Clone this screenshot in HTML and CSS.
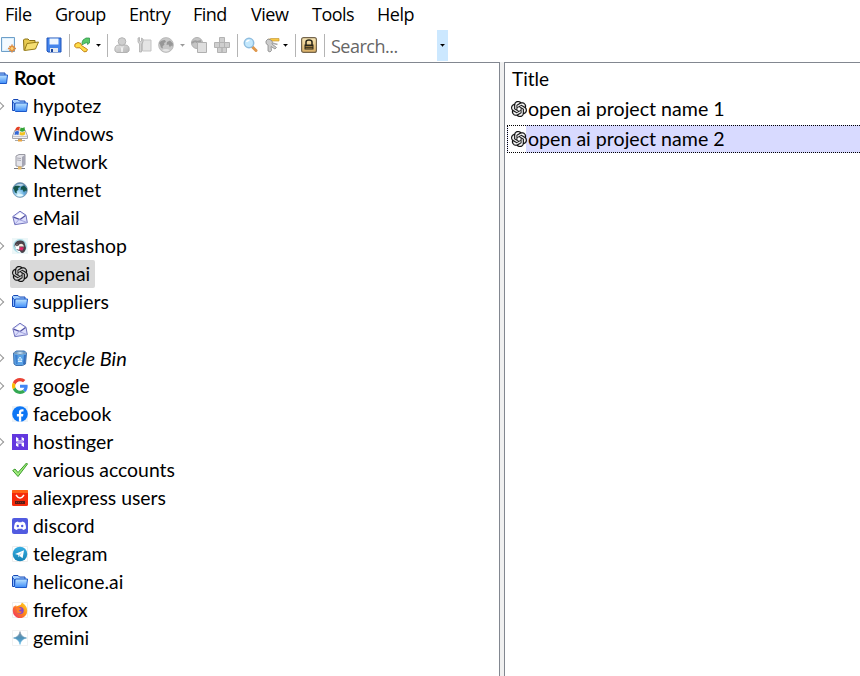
FILE: index.html
```html
<!DOCTYPE html>
<html lang="en">
<head>
<meta charset="utf-8">
<title>Password database</title>
<link rel="stylesheet" href="styles.css">
</head>
<body>
<svg class="defs" aria-hidden="true">
<defs>
<linearGradient id="blue" x1="0" y1="0" x2="0" y2="1"><stop offset="0" stop-color="#c0e6ff"/><stop offset="1" stop-color="#3d8cf8"/></linearGradient>
<radialGradient id="sphere" cx=".4" cy=".75" r=".8"><stop offset="0" stop-color="#d0f1fc"/><stop offset=".45" stop-color="#68afe0"/><stop offset="1" stop-color="#497ba8"/></radialGradient>
<linearGradient id="tg" x1="0" y1="0" x2="0" y2="1"><stop offset="0" stop-color="#37aee2"/><stop offset="1" stop-color="#1583b5"/></linearGradient>
<linearGradient id="fx" x1="1" y1="0" x2="0" y2="1"><stop offset="0" stop-color="#ffe22e"/><stop offset=".45" stop-color="#ff8a16"/><stop offset="1" stop-color="#ef2470"/></linearGradient>
<linearGradient id="gm" x1="0" y1="0" x2="0" y2="1"><stop offset="0" stop-color="#8792a0"/><stop offset=".5" stop-color="#4d91b9"/><stop offset="1" stop-color="#68bde8"/></linearGradient>
<linearGradient id="gold" x1="0" y1="0" x2="0" y2="1"><stop offset="0" stop-color="#f9e9b8"/><stop offset="1" stop-color="#d9ad62"/></linearGradient>
<linearGradient id="grey" x1="0" y1="0" x2="1" y2="1"><stop offset="0" stop-color="#e2e2e2"/><stop offset="1" stop-color="#b5b5b5"/></linearGradient>
</defs>
<symbol id="folder" viewBox="0 0 16 16"><path d="M.5 12V2.500l1-1H6l1.500 1.500h5.500v2" fill="#a8d2ff" stroke="#1748b5"/><path d="M.5 12.500V4l2 1.500v7z" fill="#8bbcff" stroke="#1748b5"/><path d="M3 5.500l1-.5h11.500l-1 8.500H3.500l-1-1z" fill="url(#blue)" stroke="#1b57c9"/></symbol>
<symbol id="windows" viewBox="0 0 16 16"><path d="M3 4h10l2.500 6v2.500H.5V10z" fill="#eeeef2" stroke="#a5a5ac"/><path d="M1 10.500h14" stroke="#c5c5cb"/><path d="M4 2q2-2 4-1L7 4.500q-2-1-4 .5z" fill="#e54225"/><path d="M8.500 1.500q2 1 4-.5L13 4.500q-2 2-5 .5z" fill="#35a437"/><path d="M3 5.800q2-1.500 4-.3L6.500 9q-2-1-4 0z" fill="#3267d6"/><path d="M8 6q2 1 5-.5v3Q11 10 7.500 9z" fill="#f3c322"/><path d="M6 12.500h4V15H6z" fill="#999"/><path d="M3 14.500h10" stroke="#aaa"/><path d="M6 14.500h4" stroke="#eda33a" stroke-width="2"/></symbol>
<symbol id="server" viewBox="0 0 16 16"><path d="M4 2l3-1.500h6v10L10.500 13 4 12z" fill="#e5e5eb" stroke="#9a9aa3"/><path d="M10 3l3-2v9.500L10 13z" fill="#a4a4b2"/><path d="M5 4l4 .5M5 6l4 .5" stroke="#aaaab4"/><path d="M2 14.500h11" stroke="#77777f"/><path d="M6 12.500h3.500v3H6z" fill="#e6ba68"/></symbol>
<symbol id="globe" viewBox="0 0 16 16"><circle cx="8" cy="8" r="7.400" fill="url(#sphere)" stroke="#8297a9" stroke-width=".8"/><path d="M1 6q2-3 6-3l1 2-2 1 .5 1.500-2 2 .5 2-2-1-1-3zM9 5l3-1.500 3 3-.5 3-1.500-1-1 2-1.500-3-2 .5z" fill="#145449"/><path d="M3 3.500q5-3 9-.5L9 4z" fill="#b9d5e5"/><path d="M4 13q4-2 8 0-4 3-8 0" fill="#e5faff"/></symbol>
<symbol id="mail" viewBox="0 0 16 16"><path d="M.8 6.500L8 1.200l6 4 1.300 7.500-12.500 2z" fill="#dcdefc" stroke="#7375bd"/><path d="M3 6.500l5-3.700 5 3-4.500 4z" fill="#fff"/><path d="M1.500 7.200L8 9.500l5.500-4" fill="none" stroke="#5352a3" stroke-width="1.300"/><path d="M3 14l4-4.500L15 12.500" fill="none" stroke="#a4a6df"/></symbol>
<symbol id="presta" viewBox="0 0 16 16"><path d="M0 0h16v16H0z" fill="#edf7f8"/><circle cx="8" cy="8" r="7" fill="#a9dce7"/><path d="M2.500 8q0-5 5-5.500t5.500 4L14 10q-1 5-4 5L6 13z" fill="#4a424a"/><path d="M3 8q2-3 4 0l1 4-4-1z" fill="#fff"/><circle cx="5" cy="7.500" r=".8" fill="#222"/><path d="M7 6.500q4-2 5 2H7z" fill="#f5e8dd"/><path d="M8 9l4 .5-1.500 3L7 12z" fill="#dd2463"/><path d="M4 12l4 1 1 2q-3 0-5-3" fill="#fff"/></symbol>
<symbol id="openai" viewBox="0 0 24 24"><path fill="#111" stroke="#111" stroke-width=".3" d="M22.282 9.821a5.985 5.985 0 0 0-.516-4.910 6.046 6.046 0 0 0-6.510-2.900A6.065 6.065 0 0 0 4.981 4.182a5.985 5.985 0 0 0-3.998 2.900 6.046 6.046 0 0 0 .743 7.097 5.980 5.980 0 0 0 .510 4.911 6.051 6.051 0 0 0 6.515 2.900A5.985 5.985 0 0 0 13.260 24a6.056 6.056 0 0 0 5.772-4.206 5.990 5.990 0 0 0 3.998-2.900 6.056 6.056 0 0 0-.748-7.073zM13.260 22.430a4.476 4.476 0 0 1-2.876-1.040l.141-.081 4.779-2.758a.795.795 0 0 0 .393-.681v-6.737l2.020 1.169a.071.071 0 0 1 .038.052v5.583a4.504 4.504 0 0 1-4.495 4.493zM3.600 18.304a4.471 4.471 0 0 1-.535-3.014l.142.085 4.783 2.759a.771.771 0 0 0 .781 0l5.843-3.369v2.332a.080.080 0 0 1-.033.062L9.740 19.950A4.500 4.500 0 0 1 3.600 18.304zM2.341 7.896a4.485 4.485 0 0 1 2.366-1.973V11.600a.766.766 0 0 0 .388.677l5.815 3.354-2.020 1.169a.076.076 0 0 1-.071 0l-4.830-2.787A4.504 4.504 0 0 1 2.341 7.872zm16.597 3.855l-5.833-3.387L15.119 7.200a.076.076 0 0 1 .071 0l4.830 2.791a4.494 4.494 0 0 1-.676 8.105v-5.678a.790.790 0 0 0-.407-.667zm2.011-3.023l-.142-.085-4.774-2.782a.776.776 0 0 0-.785 0L9.409 9.230V6.897a.066.066 0 0 1 .028-.061l4.830-2.787a4.500 4.500 0 0 1 6.680 4.660zM8.307 12.863l-2.020-1.164a.080.080 0 0 1-.038-.057V6.075a4.500 4.500 0 0 1 7.376-3.454l-.142.081L8.704 5.460a.795.795 0 0 0-.393.681zm1.097-2.365l2.602-1.500 2.607 1.500v2.999l-2.597 1.500-2.607-1.500z"/></symbol>
<symbol id="bin" viewBox="0 0 16 16"><path d="M1.500 3l3-2h8l2 2-1 11-3 1.500H4L2 14z" fill="#5ba3e6" stroke="#4272ad"/><path d="M2 3q6-3 12 0-6 3-12 0" fill="#c5e4fc" stroke="#7497b8"/><path d="M12 5l-1 9h2l1-9z" fill="#3470c0"/><path d="M3 5l1 9h1.500V5z" fill="#3e80cf"/><path d="M6 10l2-3 2 3zM6 11.500h4" stroke="#d7efff" fill="none"/></symbol>
<symbol id="google" viewBox="0 0 48 48"><path fill="#EA4335" d="M24 9.500c3.500 0 6.700 1.200 9.200 3.600l6.900-6.900C35.900 2.400 30.500 0 24 0 14.600 0 6.500 5.400 2.600 13.200l8 6.200C12.400 13.700 17.700 9.500 24 9.500z"/><path fill="#4285F4" d="M47 24.600c0-1.600-.2-3.100-.4-4.600H24v9h12.900c-.6 3-2.200 5.500-4.700 7.200l7.700 6C44.400 38 47 31.800 47 24.600z"/><path fill="#FBBC05" d="M10.500 28.600A14 14 0 0 1 10.500 19.400l-8-6.200A24 24 0 0 0 2.600 34.800z"/><path fill="#34A853" d="M24 48c6.500 0 11.900-2.100 15.900-5.800l-7.700-6c-2.200 1.500-4.900 2.300-8.200 2.300-6.300 0-11.600-4.200-13.500-9.900l-7.900 6.200C6.500 42.600 14.600 48 24 48z"/></symbol>
<symbol id="facebook" viewBox="0 0 16 16"><path d="M0 0h16v16H0z" fill="#edf2f6"/><circle cx="8" cy="8" r="7.800" fill="#0d76f5"/><path fill="#fff" d="M6.900 15.800v-5.300h-2V8.100h2V6.500c0-2.200 1.200-3.300 3.200-3.300l1.400.1v2.100h-1c-1 0-1.300.5-1.300 1.300v1.400h2.200l-.4 2.400H9.200v5.300z"/></symbol>
<symbol id="hostinger" viewBox="0 0 16 16"><path d="M0 0h16v16H0z" fill="#6338df"/><path fill="#fff" d="M4 7.500V3l2.400 1.300v2.200h3.200l2.400 1H4zM12 8.500V13l-2.400-1.300V9.500H6.400L4 8.500zM9.600 3L12 4.300v2.800L9.600 6zM4 9l2.400 1v3L4 11.700z"/></symbol>
<symbol id="check" viewBox="0 0 16 16"><path d="M.7 8.500L3 7l3 3.500L14.500 1l1 1L6 14.500z" fill="#a0ec7c" stroke="#3c9b2d"/></symbol>
<symbol id="ali" viewBox="0 0 16 16"><rect width="16" height="16" rx="1.500" fill="#f52b0b"/><path d="M0 1q0-1 1-1h14q1 0 1 1v2H0z" fill="#ff6417"/><path d="M4 5q4 6 8 0" fill="none" stroke="#fff" stroke-width="1.400"/><path d="M3 11h10v3H3z" fill="#5c1c16"/><path d="M4 12.500h8" stroke="#8d3025" stroke-dasharray="1"/></symbol>
<symbol id="discord" viewBox="0 0 16 16"><rect width="16" height="16" rx="2" fill="#515be0"/><path d="M3 5q1-1.500 3-1.500l.5.800h3l.5-.8q2 0 3 1.500 1.200 3 1 5.500-1.400 1.400-3 1.500l-.8-1.300H5.800L5 12q-1.600-.1-3-1.500Q2 7.500 3 5z" fill="#fff"/><ellipse cx="5.800" cy="8" rx="1.200" ry="1.300" fill="#515be0"/><ellipse cx="10.200" cy="8" rx="1.200" ry="1.300" fill="#515be0"/></symbol>
<symbol id="telegram" viewBox="0 0 16 16"><path d="M.5.500h15v15H.5z" fill="#fff" stroke="#eee"/><circle cx="8" cy="8" r="7.300" fill="url(#tg)"/><path d="M3 8l9-3.800-1.400 8-3-2.200-1.200 1.300V9z" fill="#fff"/><path d="M6.500 9.500l4-3.800-3 4.300z" fill="#9bd3ec"/></symbol>
<symbol id="firefox" viewBox="0 0 16 16"><path d="M.5.500h15v15H.5z" fill="#fff" stroke="#eee"/><path d="M2 4l1 .5 1-1.500.5 1.500Q7 3 8.500 3L10 .5Q15.500 4 15.200 9a7.200 7.200 0 0 1-14.400 0Q.6 6 2 4z" fill="url(#fx)"/><circle cx="8.200" cy="8.500" r="3.500" fill="#8747ca"/><path d="M4 6q2-2 4 0l2 1-3 1.200Q7 10 10 9.500q-2 3.500-5 1z" fill="#ff7e2a"/></symbol>
<symbol id="gemini" viewBox="0 0 16 16"><path d="M.5.500h15v15H.5z" fill="#fff" stroke="#f1f1f1"/><path d="M8 1.500Q9 7 14.500 8 9 9 8 14.500 7 9 1.500 8 7 7 8 1.500z" fill="url(#gm)" stroke="url(#gm)" stroke-width=".6"/></symbol>
<symbol id="new" viewBox="0 0 16 16"><path d="M1.500.500h13v14h-13z" fill="#dceffc" stroke="#6d9fc9"/><path d="M3 2h10v5L5 13H3z" fill="#f3faff"/><path d="M12 7.500v8M8 11.500h8M9.500 9l5 5M14.500 9l-5 5" stroke="#e08a42" stroke-width="1.500"/><circle cx="12" cy="11.500" r="2" fill="#ffd27a" stroke="#e09038"/></symbol>
<symbol id="open" viewBox="0 0 16 16"><path d="M1 13.500L.5 3l1-1H5l1.500 1.500h5.500V6" fill="#e8ca51" stroke="#897015"/><path d="M1.500 13.500L4 6.500 15.500 5 12.500 12z" fill="#f6df71" stroke="#967c18"/></symbol>
<symbol id="save" viewBox="0 0 16 16"><path d="M1 1h14v14H2l-1-1z" fill="#4384ee" stroke="#2054b9"/><path d="M3.500 1.500h9v6h-9z" fill="#edf6ff"/><path d="M3 9h10v2H3z" fill="#4384e8"/><path d="M4 11h8v4H4z" fill="#e5eaf0"/><path d="M5 12h2v3H5z" fill="#1b459c"/></symbol>
<symbol id="addkey" viewBox="0 0 17 16"><path d="M1 7l3-1.500 3 1 .5 2 6 4-1 2-2.500.3-4-4-3.500 0L.7 9.500z" fill="#ffdc46" stroke="#c48318"/><path d="M9 3l3-2h3.500v5l-2 1.500V5.500L10 6.500 8.500 8 8 5.500z" fill="#58c968" stroke="#238b43" stroke-width=".7"/></symbol>
<symbol id="user" viewBox="0 0 16 16"><path d="M1 14q-1-6 4-6h6q5 0 4 6l-2 1.500H3z" fill="url(#grey)" stroke="#b2b2b2"/><circle cx="8" cy="4.500" r="3.800" fill="#cfcfcf" stroke="#b4b4b4"/><path d="M7 9l1 6 1-6" stroke="#f5f5f5" fill="#bbb"/></symbol>
<symbol id="copykey" viewBox="0 0 16 16"><path d="M5.500 3h8.500v11H5.500z" fill="#e4e4e4" stroke="#c3c3c3"/><path d="M1 1l1.500-.5V4l1 .5L4.500 4V1L6 2v3L4.500 7v8h-2V7L1 5z" fill="#d4d4d4" stroke="#a6a6a6" stroke-width=".7"/></symbol>
<symbol id="greyglobe" viewBox="0 0 16 16"><circle cx="8" cy="8" r="7.400" fill="#c8c8c8" stroke="#b4b4b4" stroke-width=".8"/><path d="M1 6q2-3 6-3l1 2-2 1 .5 1.500-2 2 .5 2-2-1-1-3zM9 5l3-1.500 3 3-.5 3-1.500-1-1 2-1.500-3-2 .5z" fill="#979797"/><path d="M4 13q4-2 8 0-4 3-8 0" fill="#e5e5e5"/></symbol>
<symbol id="copy" viewBox="0 0 16 16"><circle cx="6" cy="6" r="5.500" fill="#c5c5c5" stroke="#b0b0b0"/><path d="M1 6q3-3 5-1l4-1" stroke="#9f9f9f" stroke-width="2" fill="none"/><path d="M6.500 5.500h9v10h-9z" fill="#dedede" stroke="#b0b0b0"/></symbol>
<symbol id="auto" viewBox="0 0 16 16"><path d="M5.500.500h5v5h-5zM.5 5.500h5v5h-5zM5.500 5.500h5v5h-5zM10.500 5.500h5v5h-5zM3.500 10.500h4.500v5H3.500zM8 10.500h4.500v5H8z" fill="#cfcfcf" stroke="#b3b3b3"/></symbol>
<symbol id="find" viewBox="0 0 16 16"><path d="M9.500 10l3.500 3.500" stroke="#df984d" stroke-width="3" stroke-linecap="round"/><circle cx="6" cy="6" r="4.700" fill="#c3e8fd" stroke="#8fbddf" stroke-width="1.500"/><path d="M3.500 5q1-2 3-1.500" stroke="#fff" fill="none" stroke-width="1.500"/></symbol>
<symbol id="keys" viewBox="0 0 16 16"><path d="M3 2.500l3-1h8v2.500H7L4 5z" fill="#f8c742" stroke="#c69b3d" stroke-width=".7"/><path d="M1 4l2-2 3 1 1.500 2-.5 2 4.500 3.500-1.500 1.500L6 9.500l.5 4-1.500 1.500-2-1V8L1 6.500z" fill="#ccc" stroke="#888" stroke-width=".8"/><path d="M7 6l5.500 1.500" stroke="#aaa" stroke-width="1.800"/></symbol>
<symbol id="lock" viewBox="0 0 16 16"><rect x=".6" y=".6" width="14.800" height="14.800" rx="2" fill="url(#gold)" stroke="#75664e" stroke-width="1.200"/><path d="M5 8V5q0-2 3-2t3 2v3" fill="none" stroke="#292518" stroke-width="1.500"/><path d="M3.500 7.500h9v5h-9z" fill="#292518"/><path d="M4.500 9.500h7M4.500 11.200h7" stroke="#c99c4f" stroke-width=".7"/></symbol>
</svg>

<nav class="menu">
<span class="m1">File</span><span class="m2">Group</span><span class="m3">Entry</span><span class="m4">Find</span><span class="m5">View</span><span class="m6">Tools</span><span class="m7">Help</span>
</nav>
<div class="toolbar">
<svg class="icon"><use href="#new"/></svg><svg class="icon"><use href="#open"/></svg><svg class="icon"><use href="#save"/></svg>
<i class="sep"></i><svg class="icon wide"><use href="#addkey"/></svg><i class="caret"></i><i class="sep s2"></i>
<svg class="icon"><use href="#user"/></svg><svg class="icon"><use href="#copykey"/></svg><svg class="icon t-gl"><use href="#greyglobe"/></svg><i class="caret off"></i><svg class="icon t-copy"><use href="#copy"/></svg><svg class="icon"><use href="#auto"/></svg>
<i class="sep s3"></i><svg class="icon t-find"><use href="#find"/></svg><svg class="icon t-keys"><use href="#keys"/></svg><i class="caret"></i><i class="sep s4"></i><svg class="icon"><use href="#lock"/></svg><i class="sep s5"></i>
<span class="search">Search...</span><button class="drop" aria-label="Search history"><i class="caret"></i></button>
</div>
<main class="panes">
<div class="tree">
<div class="row root"><svg class="icon"><use href="#folder"/></svg><b class="label">Root</b></div>
<div class="row more"><svg class="icon"><use href="#folder"/></svg><span class="label">hypotez</span></div>
<div class="row"><svg class="icon"><use href="#windows"/></svg><span class="label">Windows</span></div>
<div class="row"><svg class="icon"><use href="#server"/></svg><span class="label">Network</span></div>
<div class="row"><svg class="icon"><use href="#globe"/></svg><span class="label">Internet</span></div>
<div class="row"><svg class="icon"><use href="#mail"/></svg><span class="label">eMail</span></div>
<div class="row more"><svg class="icon"><use href="#presta"/></svg><span class="label">prestashop</span></div>
<div class="row"><div class="selected"><svg class="icon"><use href="#openai"/></svg><span class="label">openai</span></div></div>
<div class="row more"><svg class="icon"><use href="#folder"/></svg><span class="label">suppliers</span></div>
<div class="row"><svg class="icon"><use href="#mail"/></svg><span class="label">smtp</span></div>
<div class="row more"><svg class="icon"><use href="#bin"/></svg><em class="label">Recycle Bin</em></div>
<div class="row more"><svg class="icon"><use href="#google"/></svg><span class="label">google</span></div>
<div class="row"><svg class="icon"><use href="#facebook"/></svg><span class="label">facebook</span></div>
<div class="row more"><svg class="icon"><use href="#hostinger"/></svg><span class="label">hostinger</span></div>
<div class="row"><svg class="icon"><use href="#check"/></svg><span class="label">various accounts</span></div>
<div class="row"><svg class="icon"><use href="#ali"/></svg><span class="label">aliexpress users</span></div>
<div class="row"><svg class="icon"><use href="#discord"/></svg><span class="label">discord</span></div>
<div class="row"><svg class="icon"><use href="#telegram"/></svg><span class="label">telegram</span></div>
<div class="row"><svg class="icon"><use href="#folder"/></svg><span class="label">helicone.ai</span></div>
<div class="row"><svg class="icon"><use href="#firefox"/></svg><span class="label">firefox</span></div>
<div class="row"><svg class="icon"><use href="#gemini"/></svg><span class="label">gemini</span></div>
</div>
<div class="list">
<div class="head">Title</div>
<div class="entry"><svg class="icon"><use href="#openai"/></svg><span>open ai project name 1</span></div>
<div class="entry active"><svg class="icon"><use href="#openai"/></svg><span>open ai project name 2</span></div>
</div>
</main>
</body>
</html>
```
FILE: styles.css
```css
* { box-sizing: border-box; }
body { margin: 0; width: 860px; height: 676px; overflow: hidden; display: flex; flex-direction: column; background: #fff; color: #000; font: 19.4px/28px Lato, sans-serif; }
.defs { position: absolute; width: 0; height: 0; }
.icon { width: 16px; height: 16px; flex: none; }

.menu { display: flex; height: 28px; padding-left: 5px; font: 18px/28px "Open Sans", sans-serif; white-space: nowrap; }
.menu span { letter-spacing: -0.5px; }
.m1 { width: 50px; }
.m2 { width: 74px; }
.m3 { width: 64px; }
.m4 { width: 58px; }
.m5 { width: 61px; }
.m6 { width: 65px; }

.toolbar { display: flex; align-items: center; height: 34px; flex: none; }
.toolbar .icon { margin-right: 7px; }
.sep { width: 1px; height: 23px; background: #b4b4b4; margin-right: 4px; flex: none; }
.toolbar .wide { width: 17px; margin-right: 5px; }
.caret { width: 5px; height: 3px; background: #000; clip-path: polygon(0 0, 5px 0, 5px 1px, 4px 1px, 4px 2px, 3px 2px, 3px 3px, 2px 3px, 2px 2px, 1px 2px, 1px 1px, 0 1px); flex: none; }
.off { background: #999; }
.s2 { margin-left: 6px; margin-right: 6px; }
.toolbar .t-gl { margin-left: -2px; margin-right: 6px; }
.toolbar .t-copy { margin-left: 6px; }
.s3 { margin-right: 5px; }
.toolbar .t-find { margin-right: 6px; }
.toolbar .t-keys { margin-right: 2px; }
.s4 { margin: 0 5px 0 7px; }
.s5 { margin-right: 6px; }
.search { width: 106px; color: #666; font: 18px/28px "Open Sans", sans-serif; letter-spacing: -.8px; padding-top: 2px; letter-spacing: -.5px; }
.drop { width: 11px; height: 31px; padding: 0; border: 0; background: #cce8ff; display: flex; align-items: center; justify-content: center; }

.panes { display: flex; flex: 1; background: #f0f0f0; gap: 4px; }
.tree { width: 500px; padding-top: 1px; background: #fff; border: solid #828790; border-width: 1px 1px 0 0; }
.row { height: 28px; display: flex; align-items: center; padding-left: 12px; position: relative; }
.root { margin-left: -20px; }
.label { margin-left: 5px; white-space: nowrap; }
.root .label { margin-left: 6px; }
em.label { font-size: 20px; }
.more::before { content: ""; position: absolute; left: -3px; top: 11px; width: 5px; height: 5px; border: solid #999; border-width: 1.500px 1.500px 0 0; transform: rotate(45deg); }
.selected { display: flex; align-items: center; height: 28px; width: 85px; margin-left: -2px; padding-left: 2px; background: #d9d9d9; border-radius: 2px; }
.list { flex: 1; background: #fff; border: solid #828790; border-width: 1px 0 0 1px; font-size: 19.6px; }
.head { height: 32px; padding: 2px 0 0 7px; font-size: 19px; }
.entry { height: 30px; display: flex; align-items: center; padding: 0 0 2px 6px; white-space: nowrap; }
.entry .icon { margin-right: 1px; }
.active { height: 28px; margin: 0 0 0 2px; padding: 0 0 0 3px; border: 1px dotted #000; border-right: 0; background: linear-gradient(to right, #fff 18px, #d8daff 18px); }
```
